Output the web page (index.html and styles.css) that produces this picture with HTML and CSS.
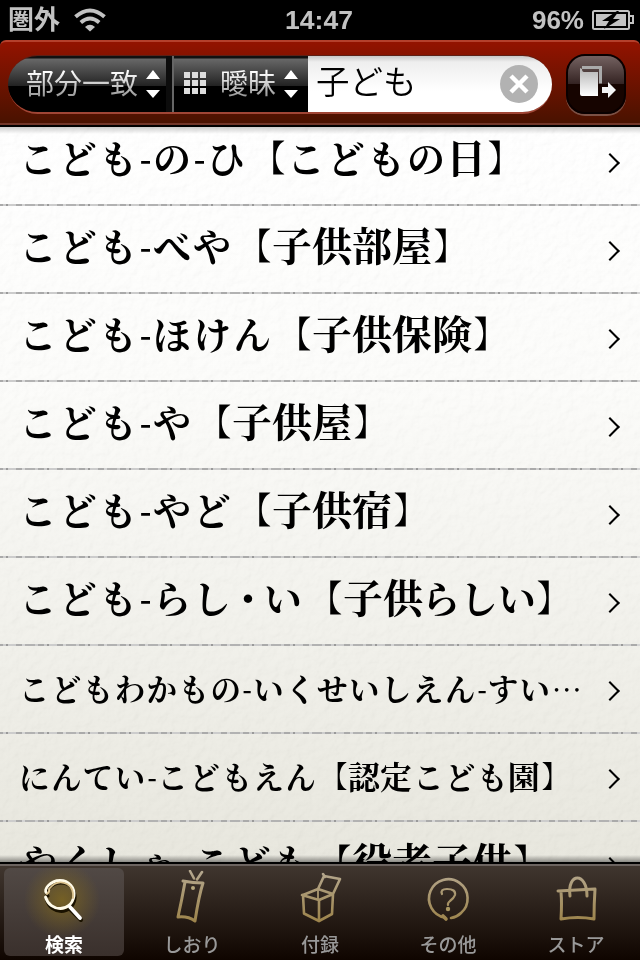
FILE: index.html
```
<!DOCTYPE html>
<html lang="ja">
<head>
<meta charset="utf-8">
<title>検索</title>
<link rel="stylesheet" href="styles.css">
</head>
<body>
<div class="screen">
  <header class="status">
    <div class="status-left"><span class="carrier">圏外</span>
      <svg class="wifi" width="32" height="24" viewBox="0 0 32 24"><g fill="none" stroke="#c2c2c2"><path d="M1.5 8.8Q16-3.8 30.500 8.800" stroke-width="4"/><path d="M6.800 14.500Q16 6.500 25.200 14.500" stroke-width="3.800"/></g><path d="M11 19Q16 14.500 21 19L16 23.500Z" fill="#c2c2c2"/></svg>
    </div>
    <span class="clock">14:47</span>
    <div class="status-right"><span>96%</span>
      <svg width="42" height="20" viewBox="0 0 42 20"><rect x="1" y="1" width="36" height="18" rx="1.500" fill="none" stroke="#c2c2c2" stroke-width="2"/><rect x="4" y="4" width="30" height="12" fill="#c2c2c2"/><path d="M38 6h3v7h-3" fill="none" stroke="#c2c2c2" stroke-width="2"/><path d="M25 1L10 11h7l-5 8L28 9h-7l6-8z" fill="#000"/></svg>
    </div>
  </header>
  <div class="toolbar">
    <div class="search">
      <button class="mode match"><span>部分一致</span><svg width="16" height="30" viewBox="0 0 16 30"><path d="M1 10L8 1l7 9zM1 21l7 8 7-8z" fill="#fff"/></svg></button>
      <button class="mode fuzzy"><i class="grid-icon"><b></b><b></b><b></b><b></b><b></b><b></b><b></b><b></b><b></b></i><span>曖昧</span><svg width="16" height="30" viewBox="0 0 16 30"><path d="M1 10L8 1l7 9zM1 21l7 8 7-8z" fill="#fff"/></svg></button>
      <div class="field"><span>子ども</span><svg width="38" height="38" viewBox="0 0 38 38"><circle cx="19" cy="19" r="19" fill="#b2b2b2"/><path d="M11 11L27 27M27 11L11 27" stroke="#fff" stroke-width="4.500"/></svg></div>
    </div>
    <button class="jump"><svg width="36" height="33" viewBox="0 0 36 33"><defs><linearGradient id="bk" x2="0" y2="1"><stop stop-color="#b4b4b4"/><stop offset="1" stop-color="#fff"/></linearGradient></defs><path d="M2 1.500h18.500v16" fill="none" stroke="#aaa" stroke-width="3"/><path d="M0 2v26q0 2 2 2h16V6H4q-2 0-2-3z" fill="url(#bk)"/><path d="M22 21h6v-5l8 8-8 8v-5h-6z" fill="#f4f4f4"/></svg></button>
  </div>
  <main class="results">
    <svg class="paper" width="640" height="736"><filter id="grain" x="0" y="0" width="100%" height="100%"><feTurbulence type="fractalNoise" baseFrequency=".11" numOctaves="3" seed="5" result="n"/><feDiffuseLighting in="n" surfaceScale="2" lighting-color="#fff"><feDistantLight azimuth="225" elevation="62"/></feDiffuseLighting></filter><rect width="640" height="736" filter="url(#grain)"/></svg>
    <ul class="list">
      <li><p>こども<i class="hy">-</i>の<i class="hy">-</i>ひ<i class="open">【</i>こどもの<b>日</b><i class="close">】</i></p><i class="chevron"></i></li>
      <li><p>こども<i class="hy">-</i>べや<i class="open">【</i><b>子供部屋</b><i class="close">】</i></p><i class="chevron"></i></li>
      <li><p>こども<i class="hy">-</i>ほけん<i class="open">【</i><b>子供保険</b><i class="close">】</i></p><i class="chevron"></i></li>
      <li><p>こども<i class="hy">-</i>や<i class="open">【</i><b>子供屋</b><i class="close">】</i></p><i class="chevron"></i></li>
      <li><p>こども<i class="hy">-</i>やど<i class="open">【</i><b>子供宿</b><i class="close">】</i></p><i class="chevron"></i></li>
      <li><p>こども<i class="hy">-</i>らし<i class="dot">・</i>い<i class="open">【</i><b>子供</b><i class="tight">らしい</i><i class="close">】</i></p><i class="chevron"></i></li>
      <li class="compact"><p>こどもわかもの<i class="hy">-</i>いくせいしえん<i class="hy">-</i>すい<i class="more">…</i></p><i class="chevron"></i></li>
      <li class="compact"><p>にんてい<i class="hy">-</i>こどもえん<i class="open">【</i><b>認定</b>こども<b>園</b><i class="close">】</i></p><i class="chevron"></i></li>
      <li><p>やくしゃ<i class="hy">-</i>こども<i class="open">【</i><b>役者子供</b><i class="close">】</i></p><i class="chevron"></i></li>
    </ul>
  </main>
  <nav class="tabs">
    <svg class="defs" width="0" height="0"><defs><linearGradient id="gold" gradientUnits="userSpaceOnUse" x1="0" y1="0" x2="0" y2="56"><stop stop-color="#b5a890"/><stop offset="1" stop-color="#9b8146"/></linearGradient></defs></svg>
    <a class="tab active"><svg width="60" height="56" viewBox="0 0 60 56"><g fill="none" stroke-linecap="round"><path d="M13 24C9 21 16 11 26 11C35 11 41 18 40 27C37 44 16 43 11.500 28" stroke="#1a1200" stroke-width="3" transform="translate(1 2)"/><path d="M12.500 23C9 20 16 10.500 26 10.500C35 10.500 41 18 40 26C37 43 16 42 11.500 27" stroke="#fffbe9" stroke-width="2.800"/><path d="M13 24Q16 22 15 19Q23 9 33 14Q40 18 39 28" stroke="#dcc38e" stroke-width="1.800"/><path d="M36 38L46 48" stroke="#1a1200" stroke-width="4" transform="translate(1 2)"/><path d="M36 37L46 48" stroke="#fff" stroke-width="3.800"/></g></svg><span>検索</span></a>
    <a class="tab"><svg width="60" height="56" viewBox="0 0 60 56"><g fill="none" stroke="url(#gold)" stroke-linejoin="round" stroke-linecap="round"><path d="M21 11Q31 13 41 13Q37 25 33 51Q26 46 16 47Q20 29 23 12" stroke-width="3"/><path d="M28 1L32 8.500M40 2L35 9.500" stroke-width="2.600"/></g><circle cx="31" cy="18" r="2" fill="#b5a77d"/></svg><span>しおり</span></a>
    <a class="tab"><svg width="60" height="56" viewBox="0 0 60 56"><g fill="none" stroke="url(#gold)" stroke-width="2.600" stroke-linejoin="round" stroke-linecap="round"><path d="M12 25L29 30V51L14 43.500L13 25"/><path d="M29 30L43 24L42 44L29 51M13 25L28 19L43 24M28 19L34 6L50 9L43 24M33 4L35 7"/><path d="M28 19V29" stroke-width="1.800"/></g></svg><span>付録</span></a>
    <a class="tab"><svg width="60" height="56" viewBox="0 0 60 56"><g fill="none" stroke="url(#gold)" stroke-linecap="round"><path d="M27 47.500A19.300 19.300 0 1 1 43 43Q39 47 33 48" stroke-width="2.600"/><path d="M24 24Q22 19 29 19Q38 19 37 25Q36 28 32 31Q29.500 33 30 35" stroke-width="2.200"/><path d="M25 46L28 49" stroke-width="3.600"/></g><circle cx="30" cy="39" r="2.200" fill="#a99762"/></svg><span>その他</span></a>
    <a class="tab"><svg width="60" height="56" viewBox="0 0 60 56"><g fill="none" stroke="url(#gold)" stroke-width="3" stroke-linejoin="round" stroke-linecap="round"><path d="M12 21L49 19Q48 34 48 49Q32 46 15 49Q16 33 15 22"/><path d="M24 26C21 2 41 2 41 26" /></g></svg><span>ストア</span></a>
  </nav>
</div>
</body>
</html>
```
FILE: styles.css
```
* { box-sizing: border-box; }
body { margin: 0; background: #000; font-family: "Noto Sans CJK JP", sans-serif; }
button { border: 0; margin: 0; padding: 0; font: inherit; }
i { font-style: normal; }
.screen { width: 640px; height: 960px; display: flex; flex-direction: column; overflow: hidden; }

.status { height: 40px; flex: none; display: grid; grid-template-columns: 1fr auto 1fr; align-items: center; padding: 0 6px 0 8px; color: #c2c2c2; font: bold 26px/40px "Liberation Sans", "Noto Sans CJK JP", sans-serif; }
.status-left, .status-right { display: flex; align-items: center; }
.status-left { gap: 14px; }
.carrier { font-weight: 600; }
.clock { font-size: 26.5px; margin-left: -4px; }
.status-right { justify-content: flex-end; gap: 8px; }

.toolbar { height: 87px; flex: none; display: flex; align-items: flex-start; padding: 13px 14px 0 8px; gap: 14px; border-radius: 6px 6px 0 0; border-top: 2px solid #b4402c; border-bottom: 2px solid #000; background: linear-gradient(#931300, #471200); box-shadow: inset 0 -2px #713629; }
.search { display: flex; width: 544px; height: 59px; border-radius: 30px; overflow: hidden; border-bottom: 2px solid #a04535; border-top: 1px solid #5c2016; }
.mode { display: flex; align-items: center; color: #ddd; font-size: 28px; background: linear-gradient(#111 0 2px, #676767 3px, #222 30px, #000 30px); }
.mode span { background: linear-gradient(#fff 25%, #999 85%); background-clip: text; color: transparent; line-height: 40px; margin-top: -4px; }
.match { width: 164px; padding-left: 18px; gap: 7px; border-right: 6px solid #0c0c0c; }
.match svg { flex: none; }
.fuzzy { width: 136px; padding-left: 10px; border-left: 2px solid #666; gap: 7px; }
.fuzzy span { margin-left: 7px; }
.grid-icon { display: grid; grid-template-columns: repeat(3, 6px); grid-auto-rows: 6px; gap: 2px; margin-top: -3px; }
.grid-icon b { background: #ddd; }
.field { flex: 1; display: flex; align-items: center; justify-content: space-between; padding: 0 14px 0 8px; background: linear-gradient(#c8c8c8, #eee 6px, #fff 35px); font-size: 33.5px; font-weight: 350; }
.field span { line-height: 50px; margin-top: -8px; }
.jump { width: 60px; height: 60px; margin-top: -1px; border-radius: 19px; border: 2px solid #090000; background: linear-gradient(#746261, #342322 50%, #160400 50%); box-shadow: 0 2px #7b5145; display: grid; place-items: center; }
.jump svg { margin: -3px 0 0 4px; }

.results { position: relative; height: 735px; flex: none; overflow: hidden; background: linear-gradient(#fff, #fcfcfa 35%, #e8e7de); }
.results::after { content: ""; position: absolute; inset: 0; background: linear-gradient(#0003, transparent 7px calc(100% - 7px), #0006); }
.paper { position: absolute; inset: 0; mix-blend-mode: multiply; opacity: .1; }
.list { position: relative; list-style: none; margin: -9px 0 0; padding: 0; }
.list li { height: 88px; display: flex; align-items: center; justify-content: space-between; padding: 0 18px 0 19px; background: repeating-linear-gradient(90deg, #aaa 0 3px, #ccc 3px 6px, #999 6px 8px, #ccc 8px 16px, #aaa 16px 22px, #d4d4d4 22px 25px, #b2b2b2 25px 35px, #ccc 35px 38px, #aaa 38px 41px) 0 100% / 100% 2px no-repeat; }
.list p { margin: -11px 0 0; font-family: "Noto Serif CJK JP", serif; font-size: 38px; letter-spacing: 2px; line-height: 60px; font-weight: 700; white-space: nowrap; text-spacing-trim: space-all; }
.list b { font-size: 40px; letter-spacing: 0; font-weight: 700; margin-left: -1px; margin-right: 1px; }
.open, .close { display: inline-block; width: 40px; font-size: 40px; letter-spacing: 0; font-weight: 900; line-height: 40px; }
.open { transform: translateX(-2px) scale(.8, .88); transform-origin: right 50%; }
.close { transform: translateX(1px) scale(.8, .88); transform-origin: left 50%; }
.hy { display: inline-block; width: 14px; letter-spacing: 0; font-weight: 900; text-align: center; text-indent: -1px; transform: scaleX(.8); }
.dot { margin: 0 -5px 0 -4px; }
.tight { letter-spacing: 0; margin-left: -2px; }
.list .compact p { font-size: 30.5px; letter-spacing: 1.4px; margin-top: -5px; }
.compact b { font-size: 32px; }
.compact .open, .compact .close { width: 32px; font-size: 32px; line-height: 32px; }
.compact .hy { width: 11px; }
.more { letter-spacing: 0; font-weight: 900; }
.chevron { width: 14px; height: 14px; border: solid #000; border-width: 2px 2px 0 0; transform: rotate(45deg); flex: none; margin: 1px 5px 0 0; }

.tabs { height: 98px; flex: none; display: grid; grid-template-columns: repeat(5, 128px); padding: 4px 0 4px; border-top: 2px solid #000; background: linear-gradient(#6c6460 0 2px, #40362f 2px, #0f0500); }
.defs { position: absolute; }
.tab { display: flex; flex-direction: column; align-items: center; margin: 0 4px; border-radius: 6px; color: #999; font-size: 19px; font-weight: 500; line-height: 24px; }
.tab svg { margin-top: 2px; }
.tab span { margin-top: 6px; }
.active { color: #fff; background: radial-gradient(circle at 58px 32px, #80681fcc, transparent 38px), linear-gradient(#514945, #3a302c); font-weight: 700; }
```
